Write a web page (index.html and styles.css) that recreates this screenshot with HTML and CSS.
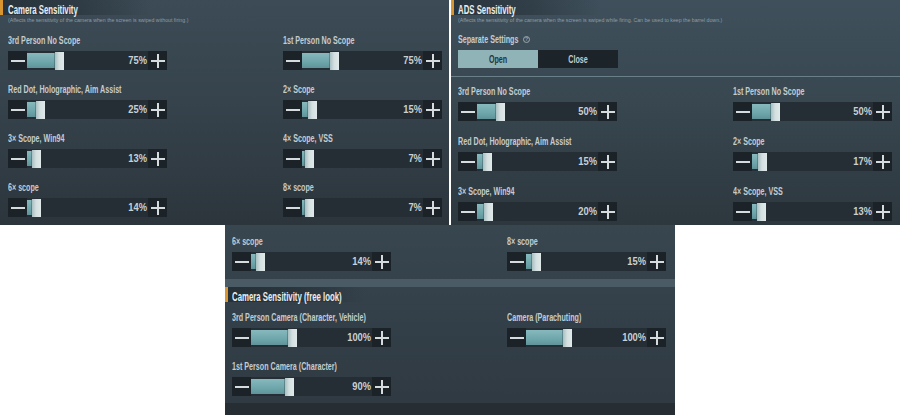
FILE: index.html
```html
<!DOCTYPE html>
<html lang="en">
<head>
<meta charset="utf-8">
<title>Sensitivity Settings</title>
<link rel="stylesheet" href="styles.css">
</head>
<body>
<div class="sheet">
  <div class="top-row">
    <section class="panel panel-cam">
      <header class="head"><h2 class="title">Camera Sensitivity</h2></header>
      <p class="desc"><span>(Affects the sensitivity of the camera when the screen is swiped without firing.)</span></p>
      <div class="grid grid-cam">
        <div class="setting"><div class="label"><span>3rd Person No Scope</span></div>
          <div class="slider" style="--v:75"><button class="btn"><svg viewBox="0 0 14 14"><path d="M0 7h14"/></svg></button><div class="track"><div class="fill"></div><div class="knob"></div><span class="val">75%</span></div><button class="btn"><svg viewBox="0 0 14 14"><path d="M0 7h14M7 0v14"/></svg></button></div></div>
        <div class="setting"><div class="label"><span>1st Person No Scope</span></div>
          <div class="slider" style="--v:75"><button class="btn"><svg viewBox="0 0 14 14"><path d="M0 7h14"/></svg></button><div class="track"><div class="fill"></div><div class="knob"></div><span class="val">75%</span></div><button class="btn"><svg viewBox="0 0 14 14"><path d="M0 7h14M7 0v14"/></svg></button></div></div>
        <div class="setting"><div class="label"><span>Red Dot, Holographic, Aim Assist</span></div>
          <div class="slider" style="--v:25"><button class="btn"><svg viewBox="0 0 14 14"><path d="M0 7h14"/></svg></button><div class="track"><div class="fill"></div><div class="knob"></div><span class="val">25%</span></div><button class="btn"><svg viewBox="0 0 14 14"><path d="M0 7h14M7 0v14"/></svg></button></div></div>
        <div class="setting"><div class="label"><span>2× Scope</span></div>
          <div class="slider" style="--v:15"><button class="btn"><svg viewBox="0 0 14 14"><path d="M0 7h14"/></svg></button><div class="track"><div class="fill"></div><div class="knob"></div><span class="val">15%</span></div><button class="btn"><svg viewBox="0 0 14 14"><path d="M0 7h14M7 0v14"/></svg></button></div></div>
        <div class="setting"><div class="label"><span>3× Scope, Win94</span></div>
          <div class="slider" style="--v:13"><button class="btn"><svg viewBox="0 0 14 14"><path d="M0 7h14"/></svg></button><div class="track"><div class="fill"></div><div class="knob"></div><span class="val">13%</span></div><button class="btn"><svg viewBox="0 0 14 14"><path d="M0 7h14M7 0v14"/></svg></button></div></div>
        <div class="setting"><div class="label"><span>4× Scope, VSS</span></div>
          <div class="slider" style="--v:7"><button class="btn"><svg viewBox="0 0 14 14"><path d="M0 7h14"/></svg></button><div class="track"><div class="fill"></div><div class="knob"></div><span class="val">7%</span></div><button class="btn"><svg viewBox="0 0 14 14"><path d="M0 7h14M7 0v14"/></svg></button></div></div>
        <div class="setting"><div class="label"><span>6× scope</span></div>
          <div class="slider" style="--v:14"><button class="btn"><svg viewBox="0 0 14 14"><path d="M0 7h14"/></svg></button><div class="track"><div class="fill"></div><div class="knob"></div><span class="val">14%</span></div><button class="btn"><svg viewBox="0 0 14 14"><path d="M0 7h14M7 0v14"/></svg></button></div></div>
        <div class="setting"><div class="label"><span>8× scope</span></div>
          <div class="slider" style="--v:7"><button class="btn"><svg viewBox="0 0 14 14"><path d="M0 7h14"/></svg></button><div class="track"><div class="fill"></div><div class="knob"></div><span class="val">7%</span></div><button class="btn"><svg viewBox="0 0 14 14"><path d="M0 7h14M7 0v14"/></svg></button></div></div>
      </div>
    </section>

    <section class="panel panel-ads">
      <header class="head"><h2 class="title">ADS Sensitivity</h2></header>
      <p class="desc"><span>(Affects the sensitivity of the camera when the screen is swiped while firing. Can be used to keep the barrel down.)</span></p>
      <div class="separate">
        <div class="label"><span>Separate Settings</span><i class="help">?</i></div>
        <div class="toggle"><span class="opt on"><b>Open</b></span><span class="opt"><b>Close</b></span></div>
      </div>
      <hr class="rule">
      <div class="grid grid-ads">
        <div class="setting"><div class="label"><span>3rd Person No Scope</span></div>
          <div class="slider" style="--v:50"><button class="btn"><svg viewBox="0 0 14 14"><path d="M0 7h14"/></svg></button><div class="track"><div class="fill"></div><div class="knob"></div><span class="val">50%</span></div><button class="btn"><svg viewBox="0 0 14 14"><path d="M0 7h14M7 0v14"/></svg></button></div></div>
        <div class="setting"><div class="label"><span>1st Person No Scope</span></div>
          <div class="slider" style="--v:50"><button class="btn"><svg viewBox="0 0 14 14"><path d="M0 7h14"/></svg></button><div class="track"><div class="fill"></div><div class="knob"></div><span class="val">50%</span></div><button class="btn"><svg viewBox="0 0 14 14"><path d="M0 7h14M7 0v14"/></svg></button></div></div>
        <div class="setting"><div class="label"><span>Red Dot, Holographic, Aim Assist</span></div>
          <div class="slider" style="--v:15"><button class="btn"><svg viewBox="0 0 14 14"><path d="M0 7h14"/></svg></button><div class="track"><div class="fill"></div><div class="knob"></div><span class="val">15%</span></div><button class="btn"><svg viewBox="0 0 14 14"><path d="M0 7h14M7 0v14"/></svg></button></div></div>
        <div class="setting"><div class="label"><span>2× Scope</span></div>
          <div class="slider" style="--v:17"><button class="btn"><svg viewBox="0 0 14 14"><path d="M0 7h14"/></svg></button><div class="track"><div class="fill"></div><div class="knob"></div><span class="val">17%</span></div><button class="btn"><svg viewBox="0 0 14 14"><path d="M0 7h14M7 0v14"/></svg></button></div></div>
        <div class="setting"><div class="label"><span>3× Scope, Win94</span></div>
          <div class="slider" style="--v:20"><button class="btn"><svg viewBox="0 0 14 14"><path d="M0 7h14"/></svg></button><div class="track"><div class="fill"></div><div class="knob"></div><span class="val">20%</span></div><button class="btn"><svg viewBox="0 0 14 14"><path d="M0 7h14M7 0v14"/></svg></button></div></div>
        <div class="setting"><div class="label"><span>4× Scope, VSS</span></div>
          <div class="slider" style="--v:13"><button class="btn"><svg viewBox="0 0 14 14"><path d="M0 7h14"/></svg></button><div class="track"><div class="fill"></div><div class="knob"></div><span class="val">13%</span></div><button class="btn"><svg viewBox="0 0 14 14"><path d="M0 7h14M7 0v14"/></svg></button></div></div>
      </div>
    </section>
  </div>

  <section class="panel panel-free">
    <div class="grid grid-scope">
      <div class="setting"><div class="label"><span>6× scope</span></div>
        <div class="slider" style="--v:14"><button class="btn"><svg viewBox="0 0 14 14"><path d="M0 7h14"/></svg></button><div class="track"><div class="fill"></div><div class="knob"></div><span class="val">14%</span></div><button class="btn"><svg viewBox="0 0 14 14"><path d="M0 7h14M7 0v14"/></svg></button></div></div>
      <div class="setting"><div class="label"><span>8× scope</span></div>
        <div class="slider" style="--v:15"><button class="btn"><svg viewBox="0 0 14 14"><path d="M0 7h14"/></svg></button><div class="track"><div class="fill"></div><div class="knob"></div><span class="val">15%</span></div><button class="btn"><svg viewBox="0 0 14 14"><path d="M0 7h14M7 0v14"/></svg></button></div></div>
    </div>
    <div class="band"></div>
    <header class="head"><h2 class="title">Camera Sensitivity (free look)</h2></header>
    <div class="grid grid-free">
      <div class="setting"><div class="label"><span>3rd Person Camera (Character, Vehicle)</span></div>
        <div class="slider" style="--v:100"><button class="btn"><svg viewBox="0 0 14 14"><path d="M0 7h14"/></svg></button><div class="track"><div class="fill"></div><div class="knob"></div><span class="val">100%</span></div><button class="btn"><svg viewBox="0 0 14 14"><path d="M0 7h14M7 0v14"/></svg></button></div></div>
      <div class="setting"><div class="label"><span>Camera (Parachuting)</span></div>
        <div class="slider" style="--v:100"><button class="btn"><svg viewBox="0 0 14 14"><path d="M0 7h14"/></svg></button><div class="track"><div class="fill"></div><div class="knob"></div><span class="val">100%</span></div><button class="btn"><svg viewBox="0 0 14 14"><path d="M0 7h14M7 0v14"/></svg></button></div></div>
      <div class="setting"><div class="label"><span>1st Person Camera (Character)</span></div>
        <div class="slider" style="--v:90"><button class="btn"><svg viewBox="0 0 14 14"><path d="M0 7h14"/></svg></button><div class="track"><div class="fill"></div><div class="knob"></div><span class="val">90%</span></div><button class="btn"><svg viewBox="0 0 14 14"><path d="M0 7h14M7 0v14"/></svg></button></div></div>
    </div>
    <div class="foot"></div>
  </section>
</div>
</body>
</html>
```

FILE: styles.css
```css
* { box-sizing: border-box; }

html, body {
  margin: 0;
  padding: 0;
  background: #ffffff;
}

body {
  font-family: "Liberation Sans", Arial, sans-serif;
  font-weight: 700;
  color: #c3cbcf;
}

.sheet {
  width: 900px;
  height: 415px;
  overflow: hidden;
}

.top-row {
  display: flex;
  gap: 2px;
  height: 225px;
}

/* ---------- panels ---------- */
.panel {
  position: relative;
  display: flex;
  flex-direction: column;
}

.panel-cam {
  width: 449px;
  padding-left: 8px;
  background: linear-gradient(180deg, #3c4b56 0%, #36434c 45%, #2c353c 100%);
}

.panel-ads {
  width: 449px;
  padding-left: 7px;
  background: linear-gradient(180deg, #3f505c 0%, #384750 45%, #2d373e 100%);
}

.panel-free {
  width: 450px;
  height: 190px;
  margin-left: 225px;
  padding-left: 7px;
  background: linear-gradient(180deg, #38464f 0%, #34414a 40%, #2f3941 100%);
}

/* section header with accent stripe; the game font is very condensed,
   so headline and label text is squeezed horizontally */
.head {
  position: relative;
  height: 15px;
  margin-left: -8px;
  padding-left: 8px;
  width: 150px;
  background: linear-gradient(90deg, rgba(24, 32, 38, 0.55) 0%, rgba(24, 32, 38, 0.35) 55%, rgba(24, 32, 38, 0) 100%);
}
.panel-ads .head,
.panel-free .head { margin-left: -7px; padding-left: 7px; }
.panel-free .head { width: 140px; }

.head::before {
  content: "";
  position: absolute;
  left: 0;
  top: 0;
  width: 3px;
  height: 15px;
  background: #d99530;
}

.title {
  margin: 0;
  font-size: 12px;
  line-height: 15px;
  font-weight: 700;
  color: #e9edef;
  white-space: nowrap;
  display: inline-block;
  transform: scaleX(0.65);
  transform-origin: left center;
}

.desc {
  margin: 2px 0 0;
  height: 7px;
  font-size: 6px;
  line-height: 7px;
  font-weight: 400;
  color: #8f9da5;
  white-space: nowrap;
}
.desc span {
  display: inline-block;
  transform: scaleX(0.87);
  transform-origin: left center;
}

/* ---------- grids of settings ---------- */
.grid {
  display: grid;
  grid-template-columns: 159px 159px;
  column-gap: 116px;
}

.grid-cam { margin-top: 9px; row-gap: 12px; }
.grid-ads { margin-top: 7px; row-gap: 13px; }
.grid-scope { margin-top: 9px; }
.grid-free { margin-top: 8px; row-gap: 12px; }

.setting {
  display: flex;
  flex-direction: column;
}

.label {
  height: 14px;
  font-size: 11px;
  line-height: 14px;
  white-space: nowrap;
  color: #c4ccd0;
}
.label span {
  display: inline-block;
  transform: scaleX(0.65);
  transform-origin: left center;
}

/* ---------- slider ---------- */
.slider {
  display: flex;
  height: 19px;
  margin-top: 4px;
}

.btn {
  width: 19px;
  height: 19px;
  padding: 0;
  border: 0;
  display: flex;
  align-items: center;
  justify-content: center;
  background: #1c2328;
}
.btn svg {
  width: 14px;
  height: 14px;
  display: block;
}
.btn path {
  fill: none;
  stroke: #d6dcde;
  stroke-width: 2;
}

.track {
  position: relative;
  width: 121px;
  height: 19px;
  background: #252e34;
}

.fill {
  position: absolute;
  left: 0;
  top: 2px;
  bottom: 2px;
  width: calc(var(--v) / 300 * 112px + 4px);
  background: linear-gradient(180deg, #86b9bd 0%, #6ea6ac 60%, #5f9399 100%);
}

.knob {
  position: absolute;
  top: 1px;
  bottom: 0;
  left: calc(var(--v) / 300 * 112px);
  width: 9px;
  background: linear-gradient(90deg, #a9bfc1 0%, #d3dfe0 45%, #e1e9e9 100%);
  box-shadow: -1px 0 0 rgba(40, 60, 66, 0.35);
}

.val {
  position: absolute;
  right: 1px;
  top: 0;
  font-size: 11px;
  line-height: 19px;
  color: #c9d1d4;
  transform: scaleX(0.85);
  transform-origin: right center;
}

/* ---------- ADS separate settings toggle ---------- */
.separate {
  margin-top: 8px;
}
.separate .label {
  display: flex;
  align-items: center;
}
/* the squeezed label keeps its unscaled layout box, so pull the icon back */
.help {
  flex: none;
  width: 7px;
  height: 7px;
  margin-left: -28px;
  margin-top: 1px;
  border: 1px solid #9aa7ad;
  border-radius: 50%;
  font-style: normal;
  font-size: 5px;
  line-height: 5px;
  text-align: center;
  color: #9aa7ad;
}

.toggle {
  display: flex;
  width: 160px;
  height: 18px;
  margin-top: 4px;
}
.opt {
  flex: 1;
  display: flex;
  align-items: center;
  justify-content: center;
  background: #1d2429;
  color: #c3cbce;
  font-size: 11px;
}
.opt b {
  display: inline-block;
  transform: scaleX(0.65);
}
.opt.on {
  background: #8fb3b6;
  color: #26353b;
}

.rule {
  margin: 8px 0 0 -7px;
  height: 1px;
  border: 0;
  background: rgba(150, 172, 182, 0.55);
}

/* ---------- free look section ---------- */
.band {
  height: 8px;
  margin: 8px 0 0 -7px;
  background: #4a5b66;
}

.foot {
  margin: auto 0 0 -7px;
  height: 12px;
  background: #272e33;
}
```
